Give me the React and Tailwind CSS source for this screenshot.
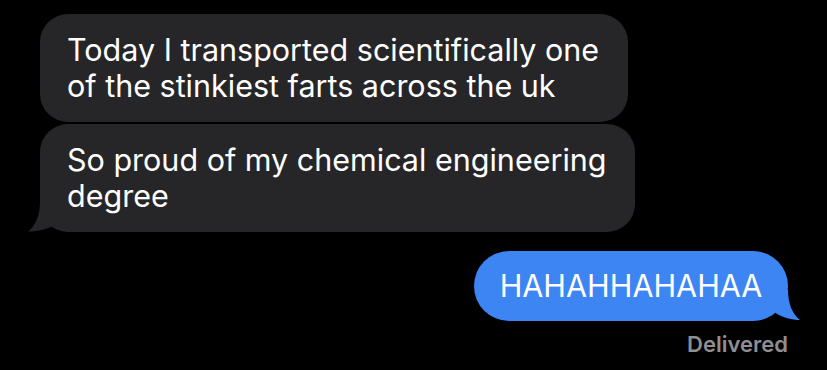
import React from 'react';

const font = { fontFamily: 'Inter, "Noto Sans", sans-serif' };

// tail pieces of the iMessage bubbles
const LeftTail = ({ color }) => (
  <svg className="absolute bottom-0 left-[-12px]" width="40" height="34" viewBox="0 0 40 34">
    <path d="M12 3 C12 17 8 27 0 33.5 C8 33.5 17 32 24 28.5 L24 3 Z" fill={color} />
  </svg>
);

const RightTail = ({ color }) => (
  <svg className="absolute bottom-0 right-[-12px]" width="40" height="34" viewBox="0 0 40 34">
    <path d="M28 3 C28 16 32 27 40 33 C32 33 23 31 15 25.5 L15 3 Z" fill={color} />
  </svg>
);

const Received = ({ text, width, tail }) => (
  <div className={`relative rounded-[28px] bg-[#262628] px-[27px] pt-[18px] pb-[18px] ${width}`}>
    <p className="text-[30.5px] leading-[36px] text-white">{text}</p>
    {tail && <LeftTail color="#262628" />}
  </div>
);

export default function App() {
  return (
    <div className="w-[827px] h-[370px] overflow-hidden bg-black" style={font}>
      <div className="flex flex-col gap-[2px] pl-[40px] pt-[14px]">
        <Received width="w-[588px]" text="Today I transported scientifically one of the stinkiest farts across the uk" />
        <Received width="w-[595px]" tail text="So proud of my chemical engineering degree" />
      </div>
      <div className="flex flex-col items-end pr-[39px] pt-[19px]">
        <div className="relative rounded-[35px] bg-[#3d85f3] h-[70px] w-[314px] flex items-center justify-center">
          <span className="text-[30.5px] text-white">HAHAHHAHAHAA</span>
          <RightTail color="#3d85f3" />
        </div>
        <div className="mt-[12px] text-[22px] leading-[22px] font-semibold text-[#8e8e93]">Delivered</div>
      </div>
    </div>
  );
}
